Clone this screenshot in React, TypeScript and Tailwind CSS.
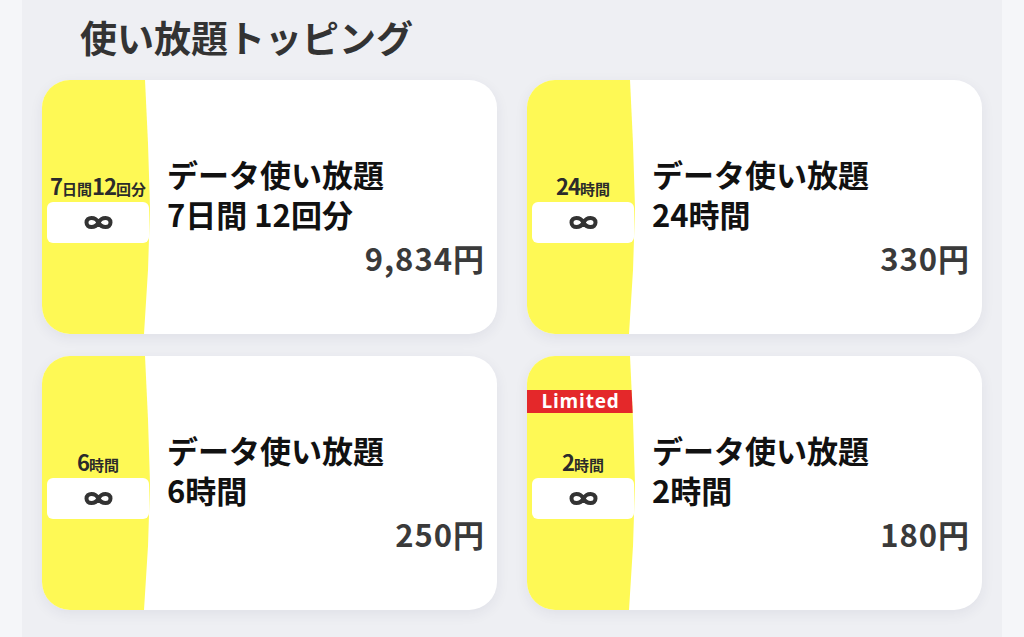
import React from "react";

interface Topping {
    label: React.ReactNode;
    title: string;
    sub: string;
    price: string;
    limited?: boolean;
}

const Num = ({ children }: { children: React.ReactNode }) => (
    <span className="text-[22px] font-bold tracking-[-1px]">{children}</span>
);
const Kan = ({ children }: { children: React.ReactNode }) => (
    <span className="text-[15px] font-bold">{children}</span>
);

const toppings: Topping[] = [
    {
        label: (<><Num>7</Num><Kan>日間</Kan><Num>12</Num><Kan>回分</Kan></>),
        title: "データ使い放題",
        sub: "7日間 12回分",
        price: "9,834円",
    },
    {
        label: (<><Num>24</Num><Kan>時間</Kan></>),
        title: "データ使い放題",
        sub: "24時間",
        price: "330円",
    },
    {
        label: (<><Num>6</Num><Kan>時間</Kan></>),
        title: "データ使い放題",
        sub: "6時間",
        price: "250円",
    },
    {
        label: (<><Num>2</Num><Kan>時間</Kan></>),
        title: "データ使い放題",
        sub: "2時間",
        price: "180円",
        limited: true,
    },
];

const Infinity = () => (
    <svg width="33" height="17" viewBox="0 0 33 17" fill="none">
        <path
            d="M16.5 8.5 C13.5 2.5, 4.5 2.5, 4.5 8.5 C4.5 14.5, 13.5 14.5, 16.5 8.5 C19.5 2.5, 28.5 2.5, 28.5 8.5 C28.5 14.5, 19.5 14.5, 16.5 8.5 Z"
            stroke="#333333"
            strokeWidth="4"
            strokeLinejoin="round"
        />
    </svg>
);

const ToppingCard = ({ item }: { item: Topping }) => {
    return (
        <div className="flex h-[254px] rounded-[28px] overflow-hidden bg-white shadow-[0_4px_14px_rgba(40,40,80,0.07)]">
            <div className="relative w-[111px] shrink-0 bg-[#fef955] flex flex-col justify-center pl-[5px] [clip-path:polygon(0_0,103px_0,106px_25%,108px_50%,106px_75%,102px_100%,0_100%)]">
                {item.limited && (
                    <div className="absolute left-0 right-0 top-[34px] h-[23px] bg-[#e4282a] flex items-center justify-center pr-[4px]">
                        <span className="text-white text-[19px] font-bold tracking-[0.8px] font-['Open_Sans',sans-serif] leading-none">Limited</span>
                    </div>
                )}
                <div className="flex flex-col items-center w-[102px] mt-[2px]">
                    <div className="text-[#2b2b2b] leading-[24px] whitespace-nowrap">{item.label}</div>
                    <div className="mt-[1px] w-[102px] h-[41px] rounded-[6px] bg-white flex items-center justify-center">
                        <Infinity />
                    </div>
                </div>
            </div>
            <div className="flex-1 flex flex-col justify-center pl-[14px] pr-[12px] pt-[18px]">
                <div className="text-[31px] leading-[40px] font-semibold text-[#111111]">
                    {item.title}
                    <br />
                    {item.sub}
                </div>
                <div className="text-[31px] leading-[40px] font-semibold text-[#3a3a3a] text-right mt-[4px] tracking-[1px]">{item.price}</div>
            </div>
        </div>
    );
};

export default function App() {
    return (
        <div className="w-[1024px] h-[637px] overflow-hidden bg-[#f5f6f9] font-['Noto_Sans_CJK_JP',sans-serif]">
            <div className="mx-[22px] h-full bg-[#eeeff3] px-[20px]">
                <h1 className="pt-[15px] pl-[38px] text-[37px] leading-[44px] font-semibold text-[#333333] mb-[21px]">
                    使い放題トッピング
                </h1>
                <div className="grid grid-cols-2 gap-x-[30px] gap-y-[22px]">
                    {toppings.map((t, i) => (
                        <ToppingCard key={i} item={t} />
                    ))}
                </div>
            </div>
        </div>
    );
}
